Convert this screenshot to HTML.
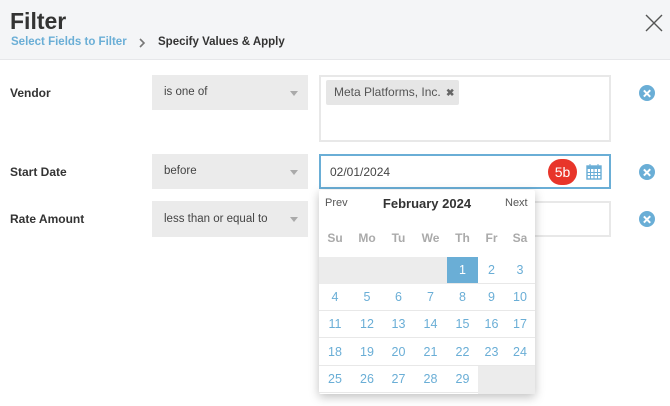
<!DOCTYPE html>
<html><head><style>
*{box-sizing:border-box;margin:0;padding:0}
body{width:670px;height:406px;background:#fff;font-family:"Liberation Sans",Arial,sans-serif;position:relative;overflow:hidden;color:#333}
.hdr{position:absolute;left:0;top:0;width:670px;height:60px;background:#f4f5f7;border-bottom:1px solid #e6e7ea}
.abs{position:absolute;white-space:nowrap}
.lbl{font-size:12px;font-weight:bold;color:#333}
.sel{position:absolute;left:152px;width:156px;background:#ebebeb;font-size:11.5px;color:#444;padding-left:12px;white-space:nowrap}
.sel:after{content:"";position:absolute;right:10px;top:50%;margin-top:-2px;border-left:4px solid transparent;border-right:4px solid transparent;border-top:5px solid #aaa}
.box{position:absolute;left:319px;width:292px;border:2px solid #e8e8e8;background:#fff}
.xb{position:absolute;left:639px;width:16px;height:16px;border-radius:50%;background:#6aaed6}
.xb:before,.xb:after{content:"";position:absolute;left:7px;top:3.5px;width:2.4px;height:9px;background:#fff;transform:rotate(45deg)}
.xb:after{transform:rotate(-45deg)}
.cal{position:absolute;left:319px;top:190px;width:216px;height:204px;background:#fff;box-shadow:0 3px 10px rgba(0,0,0,.25);border-radius:2px}
.c{position:absolute;height:27px;line-height:27px;text-align:center;font-size:12.5px;color:#6aaed6;border-bottom:1px solid #e8e8e8}
.d{position:absolute;top:231px;font-size:12px;font-weight:bold;color:#aaa;text-align:center}
</style></head><body>
<div class="hdr"></div>
<div class="abs" style="left:10px;top:8px;font-size:23px;font-weight:bold;color:#333">Filter</div>
<div class="abs" style="left:11px;top:36px;font-size:11.5px;font-weight:bold;color:#6aaed6">Select Fields to Filter</div>
<svg class="abs" style="left:138px;top:38px" width="8" height="10"><path d="M2 1L6 5L2 9" fill="none" stroke="#777" stroke-width="1.6"/></svg>
<div class="abs" style="left:158px;top:36px;font-size:11.5px;font-weight:bold;color:#333">Specify Values &amp; Apply</div>
<svg class="abs" style="left:645px;top:14px" width="18" height="18"><path d="M1 1L17 17M17 1L1 17" stroke="#555" stroke-width="1.4"/></svg>

<div class="abs lbl" style="left:10px;top:86px">Vendor</div>
<div class="abs lbl" style="left:10px;top:165px">Start Date</div>
<div class="abs lbl" style="left:10px;top:212px">Rate Amount</div>

<div class="sel" style="top:75px;height:35px;line-height:35px">is one of</div>
<div class="sel" style="top:154px;height:35px;line-height:35px">before</div>
<div class="sel" style="top:201px;height:36px;line-height:36px">less than or equal to</div>

<div class="box" style="top:75px;height:67px"></div>
<div class="abs" style="left:326px;top:80px;width:133px;height:25px;background:#e6e6e6;border-radius:2px;font-size:12px;color:#555;line-height:25px;padding-left:8px">Meta Platforms, Inc. <span style="font-weight:bold;color:#666;font-size:10px;margin-left:2px">&#x2716;</span></div>
<div class="box" style="top:201px;height:36px"></div>
<div class="box" style="top:154px;height:35px;border-color:#6aaed6"></div>
<div class="abs" style="left:330px;top:165px;font-size:12px;color:#444">02/01/2024</div>
<div class="abs" style="left:548px;top:159px;width:29px;height:26px;border-radius:13px;background:#e8352a;color:#fff;font-size:14px;text-align:center;line-height:26px">5b</div>
<svg class="abs" style="left:586px;top:163px" width="16" height="17"><rect x="1" y="3" width="14" height="13" fill="none" stroke="#6aaed6" stroke-width="1.4"/><rect x="1" y="3" width="14" height="3" fill="#6aaed6"/><path d="M4 1v4M12 1v4M1 9.5h14M1 12.5h14M4.5 6v10M8 6v10M11.5 6v10" stroke="#6aaed6" stroke-width="1"/></svg>

<div class="xb" style="top:85px"></div>
<div class="xb" style="top:164px"></div>
<div class="xb" style="top:211px"></div>

<div class="cal">
<div class="abs" style="left:6px;top:7px;font-size:11px;color:#555">Prev</div>
<div class="abs" style="left:0;width:216px;top:6px;text-align:center;font-size:13px;font-weight:bold;color:#333">February 2024</div>
<div class="abs" style="left:186px;top:7px;font-size:11px;color:#555">Next</div>
</div>
<div class="d" style="left:319px;width:32px">Su</div>
<div class="d" style="left:351px;width:32px">Mo</div>
<div class="d" style="left:383px;width:31px">Tu</div>
<div class="d" style="left:414px;width:33px">We</div>
<div class="d" style="left:447px;width:31px">Th</div>
<div class="d" style="left:478px;width:27px">Fr</div>
<div class="d" style="left:505px;width:30px">Sa</div>
<div class="abs" style="left:319px;top:257px;width:128px;height:27px;background:#ececec"></div>
<div class="abs" style="left:478px;top:366px;width:57px;height:28px;background:#ececec"></div>
<div id="g"></div>
<script>
var e=[319,351,383,414,447,478,505,535],t=[257,284,311,339,366],h='';
var n=1;
for(var r=0;r<5;r++)for(var c=0;c<7;c++){
 if(r==0&&c<4)continue; if(n>29)break;
 var s=(n==1)?'background:#6aaed6;color:#fff;':'';
 h+='<div class="c" style="'+s+'left:'+e[c]+'px;width:'+(e[c+1]-e[c])+'px;top:'+t[r]+'px">'+n+'</div>';n++;}
document.getElementById('g').innerHTML=h;
</script>
</body></html>
